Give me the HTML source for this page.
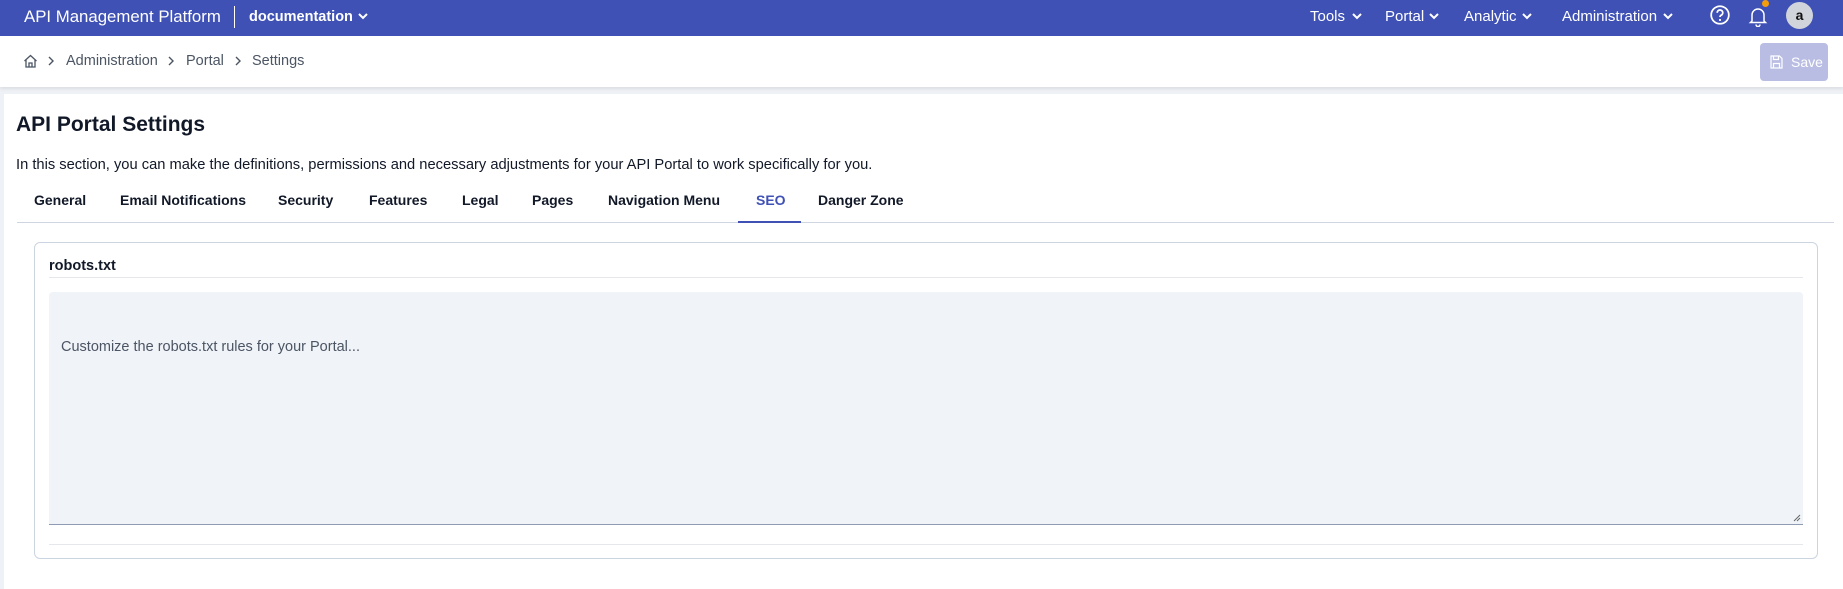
<!DOCTYPE html>
<html><head><meta charset="utf-8"><style>
*{box-sizing:border-box;margin:0;padding:0}
body{width:1843px;height:589px;overflow:hidden;background:#eef1f5;font-family:"Liberation Sans",sans-serif;position:relative;color:#111827}
.abs{position:absolute;white-space:nowrap}
.top{position:absolute;left:0;top:0;width:1843px;height:36px;background:#3f51b5;color:#fff}
.bc{position:absolute;left:0;top:36px;width:1843px;height:51px;background:#fff;box-shadow:0 2px 3px rgba(0,0,0,.08)}
.panel{position:absolute;left:4px;top:94px;right:0;bottom:0;background:#fff}
.nav{font-size:15px;top:8px}
.tab{font-size:14px;font-weight:bold;top:192px;color:#111827}
.crumb{font-size:14.5px;color:#4b5563;top:53px}
</style></head><body>
<div class="top">
 <div class="abs" style="left:24px;top:7px;font-size:16.8px">API Management Platform</div>
 <div class="abs" style="left:234px;top:6px;width:1px;height:22px;background:#fff"></div>
 <div class="abs" style="left:249px;top:9px;font-size:14.5px;font-weight:bold">documentation</div>
 <svg class="abs" style="left:357px;top:11px" width="12" height="10" viewBox="0 0 12 10"><path d="M2 3l4 4 4-4" stroke="#fff" stroke-width="2" fill="none"/></svg>
 <div class="abs nav" style="left:1310px">Tools</div>
 <svg class="abs" style="left:1351px;top:11px" width="12" height="10"><path d="M2 3l4 4 4-4" stroke="#fff" stroke-width="2" fill="none"/></svg>
 <div class="abs nav" style="left:1385px">Portal</div>
 <svg class="abs" style="left:1428px;top:11px" width="12" height="10"><path d="M2 3l4 4 4-4" stroke="#fff" stroke-width="2" fill="none"/></svg>
 <div class="abs nav" style="left:1464px">Analytic</div>
 <svg class="abs" style="left:1521px;top:11px" width="12" height="10"><path d="M2 3l4 4 4-4" stroke="#fff" stroke-width="2" fill="none"/></svg>
 <div class="abs nav" style="left:1562px">Administration</div>
 <svg class="abs" style="left:1662px;top:11px" width="12" height="10"><path d="M2 3l4 4 4-4" stroke="#fff" stroke-width="2" fill="none"/></svg>
 <svg class="abs" style="left:1709px;top:4px" width="22" height="22" viewBox="0 0 20 20"><circle cx="10" cy="10" r="8" stroke="#fff" stroke-width="1.6" fill="none"/><path d="M7.5 8a2.5 2.5 0 1 1 3.5 2.2c-.7.4-1 .8-1 1.6" stroke="#fff" stroke-width="1.6" fill="none"/><circle cx="10" cy="14.5" r="1" fill="#fff"/></svg>
 <svg class="abs" style="left:1748px;top:5px" width="20" height="22" viewBox="0 0 20 22"><path d="M4 16V10a6 6 0 0 1 12 0v6l1.5 1.5h-15z M8 19.5a2 2 0 0 0 4 0" stroke="#fff" stroke-width="1.5" fill="none"/></svg>
 <div class="abs" style="left:1762px;top:0px;width:7px;height:7px;border-radius:50%;background:#f59e0b"></div>
 <div class="abs" style="left:1786px;top:2px;width:27px;height:27px;border-radius:50%;background:#d1d5db;color:#111;font-weight:bold;font-size:14px;text-align:center;line-height:27px">a</div>
</div>
<div class="bc"></div>
<svg class="abs" style="left:23px;top:54px" width="15" height="14" viewBox="0 0 15 14"><path d="M1.5 7L7.5 1.5 13.5 7M3 5.5V13h9V5.5M6 13V9h3v4" stroke="#4b5563" stroke-width="1.3" fill="none"/></svg>
<svg class="abs" style="left:47px;top:56px" width="8" height="10"><path d="M2 1l4 4-4 4" stroke="#4b5563" stroke-width="1.4" fill="none"/></svg>
<div class="abs crumb" style="left:66px">Administration</div>
<svg class="abs" style="left:167px;top:56px" width="8" height="10"><path d="M2 1l4 4-4 4" stroke="#4b5563" stroke-width="1.4" fill="none"/></svg>
<div class="abs crumb" style="left:186px">Portal</div>
<svg class="abs" style="left:234px;top:56px" width="8" height="10"><path d="M2 1l4 4-4 4" stroke="#4b5563" stroke-width="1.4" fill="none"/></svg>
<div class="abs crumb" style="left:252px">Settings</div>
<div class="abs" style="left:1760px;top:43px;width:68px;height:38px;border-radius:4px;background:#b9bde3;color:#fff;font-size:14px;line-height:38px;padding-left:31px">Save</div>
<svg class="abs" style="left:1770px;top:55px" width="13" height="14" viewBox="0 0 13 14"><path d="M1 1h8.5L12 3.5V13H1z M3.5 1v3.5h5V1 M3.5 13V8.5h6V13" stroke="#fff" stroke-width="1.2" fill="none"/></svg>
<div class="panel"></div>
<div class="abs" style="left:16px;top:113px;font-size:21px;font-weight:bold">API Portal Settings</div>
<div class="abs" style="left:16px;top:157px;font-size:14.7px;color:#111827">In this section, you can make the definitions, permissions and necessary adjustments for your API Portal to work specifically for you.</div>
<div class="abs tab" style="left:34px">General</div>
<div class="abs tab" style="left:120px">Email Notifications</div>
<div class="abs tab" style="left:278px">Security</div>
<div class="abs tab" style="left:369px">Features</div>
<div class="abs tab" style="left:462px">Legal</div>
<div class="abs tab" style="left:532px">Pages</div>
<div class="abs tab" style="left:608px">Navigation Menu</div>
<div class="abs tab" style="left:756px;color:#3f51b5">SEO</div>
<div class="abs tab" style="left:818px">Danger Zone</div>
<div class="abs" style="left:17px;top:222px;width:1817px;height:1px;background:#cfd6e2"></div>
<div class="abs" style="left:738px;top:221px;width:63px;height:2px;background:#3f51b5"></div>
<div class="abs" style="left:34px;top:242px;width:1784px;height:317px;border:1px solid #cbd5e1;border-radius:6px"></div>
<div class="abs" style="left:49px;top:258px;font-size:14.5px;font-weight:bold">robots.txt</div>
<div class="abs" style="left:49px;top:277px;width:1754px;height:1px;background:#e5e7eb"></div>
<div class="abs" style="left:49px;top:292px;width:1754px;height:233px;background:#f0f3f8;border-bottom:1.5px solid #8e9bb3;border-radius:4px 4px 0 0"></div>
<div class="abs" style="left:61px;top:339px;font-size:14.5px;color:#4b5563">Customize the robots.txt rules for your Portal...</div>
<svg class="abs" style="left:1793px;top:514px" width="8" height="8"><path d="M1 7L7 1M4 7L7 4" stroke="#666" stroke-width="1"/></svg>
<div class="abs" style="left:49px;top:544px;width:1754px;height:1px;background:#e5e7eb"></div>
</body></html>
